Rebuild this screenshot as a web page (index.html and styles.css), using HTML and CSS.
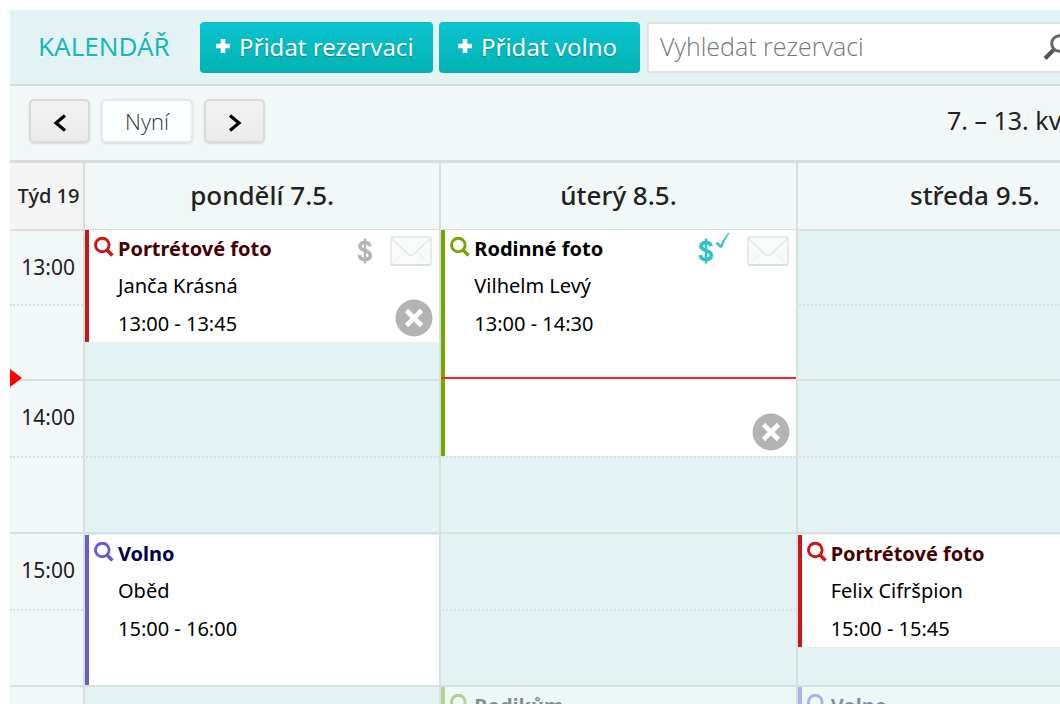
FILE: index.html
```html
<!DOCTYPE html>
<html lang="cs">
<head>
<meta charset="utf-8">
<title>Kalendář</title>
<link rel="stylesheet" href="styles.css">
</head>
<body>
<svg class="defs" aria-hidden="true">
  <symbol id="lens" viewBox="0 0 20 20"><circle cx="8.300" cy="8" r="6.800" fill="none" stroke="currentColor" stroke-width="2.900"/><path d="M13 13l5.500 5.500" stroke="currentColor" stroke-width="3.400"/></symbol>
  <symbol id="plus" viewBox="0 0 16 16"><path d="M5.700 1h4.600v4.700H15v4.600h-4.700V15H5.700v-4.700H1V5.700h4.700z" fill="currentColor"/></symbol>
  <symbol id="mail" viewBox="0 0 42 30"><rect x="1" y="1" width="40" height="28" rx="1.500" fill="#f9fbfb" stroke="#e6eaea" stroke-width="2"/><path d="M2 28L16 15M40 28L26 15" fill="none" stroke="#f0f4f4" stroke-width="1.500"/><path d="M2 3l16.500 15.500q2.500 2 5 0L40 3" fill="none" stroke="#e1e6e6" stroke-width="1.500"/><path d="M1 29h40" stroke="#d9dede" stroke-width="1.500"/></symbol>
  <symbol id="close" viewBox="0 0 38 38"><circle cx="19" cy="19" r="18.500" fill="#b3b3b3"/><path d="M11.500 11.500l15 15m0-15l-15 15" stroke="#fff" stroke-width="4.600"/></symbol>
  <symbol id="dollar" viewBox="0 0 16 26"><path d="M13 8.300C12.600 5.800 10.800 4.500 8 4.500 5 4.500 3 6 3 8.300c0 5.200 10.300 3.200 10.300 9 0 2.700-2.200 4.200-5.300 4.200-3.200 0-5.300-1.500-5.600-4.500" fill="none" stroke="currentColor" stroke-width="3.600"/><path d="M8 .500v25" stroke="currentColor" stroke-width="2.400"/></symbol>
  <symbol id="tick" viewBox="0 0 15 17"><path d="M.500 11.500l2.300-1.800 2.900 3.300C7.500 8.500 10.500 3.500 13.500.700l1.200.200C11.500 5 9 10 7 15.700H4.800z" fill="currentColor"/></symbol>
</svg>
<div class="app">
  <header class="topbar">
    <h1 class="title">KALENDÁŘ</h1>
    <button class="add" type="button"><svg class="plus"><use href="#plus"/></svg>Přidat rezervaci</button>
    <button class="add add-off" type="button"><svg class="plus"><use href="#plus"/></svg>Přidat volno</button>
    <form class="search">
      <input class="search-input" type="search" placeholder="Vyhledat rezervaci" aria-label="Vyhledat rezervaci">
      <svg class="search-icon" viewBox="0 0 27 27" aria-hidden="true"><circle cx="16.500" cy="9.500" r="7.800" fill="none" stroke="#666" stroke-width="3"/><path d="M10.500 16L2 24.500" stroke="#555" stroke-width="4"/></svg>
    </form>
  </header>
  <nav class="toolbar">
    <button class="nav" type="button" aria-label="Předchozí týden"><svg class="chevron" viewBox="0 0 14 18"><path d="M12 1.500L3 9l9 7.500" fill="none" stroke="#000" stroke-width="3.200"/></svg></button>
    <button class="nav today" type="button">Nyní</button>
    <button class="nav" type="button" aria-label="Další týden"><svg class="chevron" viewBox="0 0 14 18"><path d="M2 1.500L11 9l-9 7.500" fill="none" stroke="#000" stroke-width="3.200"/></svg></button>
    <h2 class="range">7. – 13. května</h2>
  </nav>
  <main class="week">
    <div class="head week-no">Týd 19</div>
    <div class="head">pondělí 7.5.</div>
    <div class="head">úterý 8.5.</div>
    <div class="head">středa 9.5.</div>

    <div class="slot time h13">13:00</div><div class="slot mon h13"></div><div class="slot tue h13"></div><div class="slot wed h13"></div>
    <div class="slot half time h13b"></div><div class="slot half mon h13b"></div><div class="slot half tue h13b"></div><div class="slot half wed h13b"></div>
    <div class="slot time h14">14:00</div><div class="slot mon h14"></div><div class="slot tue h14"></div><div class="slot wed h14"></div>
    <div class="slot half time h14b"></div><div class="slot half mon h14b"></div><div class="slot half tue h14b"></div><div class="slot half wed h14b"></div>
    <div class="slot time h15">15:00</div><div class="slot mon h15"></div><div class="slot tue h15"></div><div class="slot wed h15"></div>
    <div class="slot half time h15b"></div><div class="slot half mon h15b"></div><div class="slot half tue h15b"></div><div class="slot half wed h15b"></div>
    <div class="slot time h16"></div><div class="slot mon h16"></div><div class="slot tue h16"></div><div class="slot wed h16"></div>

    <article class="event red mon from13 to1345">
      <svg class="lens"><use href="#lens"/></svg>
      <div class="info"><h3 class="name">Portrétové foto</h3><p class="line">Janča Krásná</p><p class="line">13:00 - 13:45</p></div>
      <div class="marks"><svg class="dollar"><use href="#dollar"/></svg><svg class="mail"><use href="#mail"/></svg></div>
      <button class="close" type="button" aria-label="Zrušit"><svg class="close-icon"><use href="#close"/></svg></button>
    </article>
    <article class="event green tue from13 to1430">
      <svg class="lens"><use href="#lens"/></svg>
      <div class="info"><h3 class="name">Rodinné foto</h3><p class="line">Vilhelm Levý</p><p class="line">13:00 - 14:30</p></div>
      <div class="marks paid"><svg class="dollar"><use href="#dollar"/></svg><svg class="tick"><use href="#tick"/></svg><svg class="mail"><use href="#mail"/></svg></div>
      <button class="close" type="button" aria-label="Zrušit"><svg class="close-icon"><use href="#close"/></svg></button>
    </article>
    <article class="event violet mon from15 to16">
      <svg class="lens"><use href="#lens"/></svg>
      <div class="info"><h3 class="name">Volno</h3><p class="line">Oběd</p><p class="line">15:00 - 16:00</p></div>
    </article>
    <article class="event red wed from15 to1545">
      <svg class="lens"><use href="#lens"/></svg>
      <div class="info"><h3 class="name">Portrétové foto</h3><p class="line">Felix Cifršpion</p><p class="line">15:00 - 15:45</p></div>
    </article>
    <article class="event green faded tue from16">
      <svg class="lens"><use href="#lens"/></svg>
      <div class="info"><h3 class="name">Rodikům</h3></div>
    </article>
    <article class="event violet faded wed from16">
      <svg class="lens"><use href="#lens"/></svg>
      <div class="info"><h3 class="name">Volno</h3></div>
    </article>
    <div class="now-arrow"></div>
    <div class="now-line"></div>
  </main>
</div>
</body>
</html>
```
FILE: styles.css
```css
* { box-sizing: border-box; }
html, body { height: 100%; }
body {
  margin: 0;
  padding: 10px 0 0 10px;
  overflow: hidden;
  background: #fff;
  color: #222;
  font-family: "Noto Sans", "Open Sans", sans-serif;
  font-size: 20px;
}
h1, h2, h3, p { margin: 0; font-weight: 400; }
button { font-family: inherit; cursor: pointer; }
.defs { position: absolute; width: 0; height: 0; }

/* The week is wider than the window and runs off its right edge. */
.app { margin-right: -92px; background: #f2f8f8; }

.topbar {
  display: flex;
  align-items: center;
  gap: 6px;
  height: 76px;
  padding: 0 76px 0 28px;
  background: #e3f2f3;
  border-bottom: 2px solid #d3dcdc;
}
.title {
  width: 156px;
  padding-bottom: 2px;
  color: #14b8ba;
  font-size: 26px;
  line-height: 32px;
  text-shadow: 0 1px 0 #fff;
}
.add {
  display: flex;
  align-items: center;
  gap: 8px;
  flex: 0 0 233px;
  height: 51px;
  padding: 0 15px 2px;
  border: 0;
  border-radius: 4px;
  background: linear-gradient(#0bc3cf, #02b3b3);
  box-shadow: 0 0 1px 1px #f0fafa;
  color: #fff;
  font-size: 24px;
  white-space: nowrap;
  text-shadow: 0 1px 1px #08888c;
}
.add-off { flex-basis: 201px; padding-left: 18px; }
.plus { width: 16px; height: 16px; flex: none; }
.search { position: relative; flex: 1; margin-left: 1px; }
.search-input {
  display: block;
  width: 100%;
  height: 51px;
  padding: 0 48px 2px 11px;
  border: 2px solid #dfe3e3;
  border-radius: 0;
  background: #fff;
  color: #333;
  font-family: "Open Sans", sans-serif;
  font-size: 25px;
  font-weight: 300;
  outline: 0;
  appearance: none;
}
.search-input::placeholder { color: #777; opacity: 1; }
.search-icon { position: absolute; right: 6px; top: 12px; width: 27px; height: 27px; }

.toolbar {
  display: flex;
  align-items: center;
  gap: 11px;
  height: 77px;
  padding: 0 15px 4px 19px;
  border-bottom: 3px solid #d5dedd;
}
.nav {
  display: flex;
  align-items: center;
  justify-content: center;
  width: 61px;
  height: 44px;
  padding: 0;
  border: 2px solid #dadada;
  border-radius: 5px;
  background: linear-gradient(#f2f2f2, #ebebeb);
  box-shadow: 0 1px 2px #d5dada;
}
.today {
  width: 92px;
  border-color: #e4e9e9;
  background: #fcffff;
  color: #333;
  font-family: "Open Sans", sans-serif;
  font-size: 22px;
  font-weight: 300;
}
.chevron { width: 14px; height: 18px; margin-top: 4px; }
.range { width: 190px; margin-left: auto; padding-bottom: 2px; font-size: 25px; white-space: nowrap; }

.week {
  display: grid;
  grid-template-columns: 73px repeat(3, 1fr);
  grid-template-rows: 66px 37px 38px 38px 37px 38px 39px 38px 38px 38px 39px 38px 38px 38px;
}
.head {
  display: flex;
  align-items: center;
  justify-content: center;
  padding-bottom: 2px;
  border-left: 2px solid #d9dddd;
  font-size: 26px;
  font-weight: 500;
}
.week-no { border-left: 0; padding-left: 4px; background: #f4f4f4; font-size: 20px; white-space: nowrap; }
.slot {
  border-top: 2px solid #d7dfdf;
  border-left: 2px solid #d7dfdf;
  background: #e3f2f3;
}
.half { border-top: 2px dotted #d7e3e3; }
.time {
  grid-column: 1;
  padding: 20px 8px 0 0;
  border-left: 0;
  background: #f2f8f8;
  font-size: 21px;
  line-height: 32px;
  text-align: right;
}
.h13 { grid-row: 2 / 4; }
.h13b { grid-row: 4 / 6; }
.h14 { grid-row: 6 / 8; }
.h14b { grid-row: 8 / 10; }
.h15 { grid-row: 10 / 12; }
.h15b { grid-row: 12 / 14; }
.h16 { grid-row: 14; }

.event {
  position: relative;
  display: flex;
  gap: 4px;
  margin: 1px 0 0 2px;
  padding: 0 7px 0 5px;
  border-left: 4px solid;
  background: #fff;
  overflow: hidden;
}
.mon { grid-column: 2; }
.tue { grid-column: 3; }
.wed { grid-column: 4; }
.from13 { grid-row-start: 2; }
.from15 { grid-row-start: 10; margin-top: 3px; }
.from16 { grid-row-start: 14; margin-top: 2px; }
.to1345 { grid-row-end: 5; }
.to1430 { grid-row-end: 8; }
.to1545 { grid-row-end: 13; }
.to16 { grid-row-end: 14; }
.red { border-left-color: #cf1418; color: #cf1418; }
.green { border-left-color: #74a800; color: #74a800; }
.violet { border-left-color: #6a5dd0; color: #6a5dd0; }
.faded { opacity: 0.42; }
.lens { flex: none; width: 20px; height: 20px; margin-top: 7px; }
.info { flex: 1; padding-top: 1px; color: #000; white-space: nowrap; }
.name { font-size: 20px; font-weight: 700; line-height: 36px; }
.red .name { color: #480000; }
.violet .name { color: #00004e; }
.line { font-size: 20px; line-height: 38px; }
.marks { display: flex; align-items: flex-start; gap: 17px; height: 30px; margin-top: 6px; color: #b5b5b5; }
.dollar { width: 16px; height: 26px; margin-top: 2px; }
.mail { width: 42px; height: 30px; }
.paid { gap: 1px; color: #2fc3c5; }
.tick { width: 15px; height: 17px; margin: -4px 16px 0 0; }
.close { position: absolute; right: 6px; bottom: 5px; padding: 0; border: 0; background: none; }
.close-icon { display: block; width: 38px; height: 38px; }

.now-arrow {
  grid-area: 5 / 1;
  align-self: end;
  justify-self: start;
  margin-bottom: -8px;
  border: solid transparent;
  border-width: 9px 0 9px 12px;
  border-left-color: #f00;
  z-index: 1;
}
.now-line { grid-area: 5 / 3; align-self: end; height: 2px; margin-left: 2px; background: #f22; z-index: 1; }
```
